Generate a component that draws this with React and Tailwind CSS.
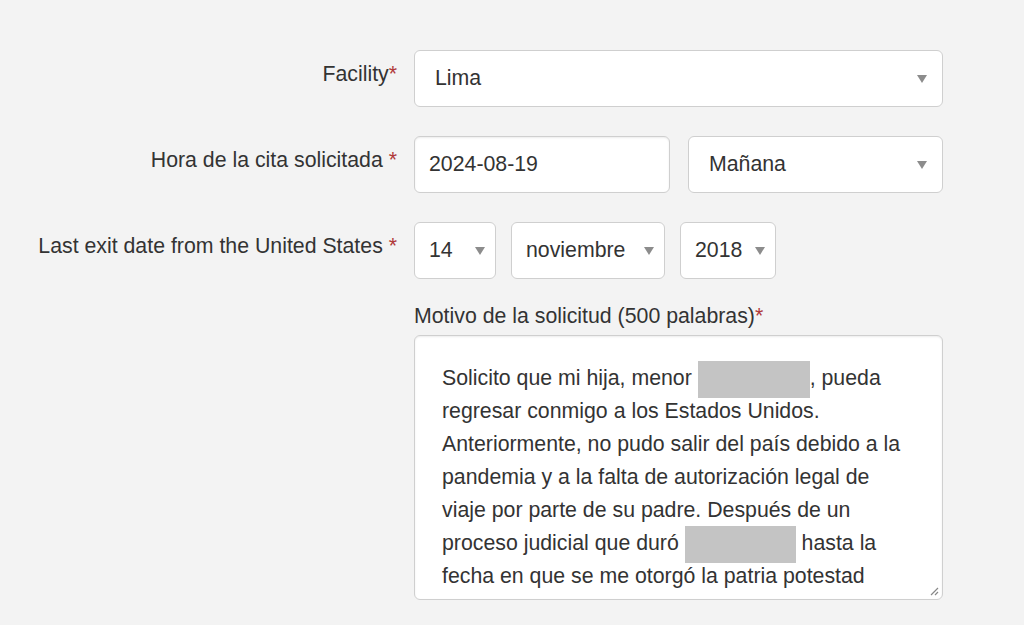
import React from 'react';

const Req = ({ space = true }) => (
  <span className="text-[#b03a3a]">{space ? ' *' : '*'}</span>
);

const Caret = () => (
  <svg width="10" height="8" viewBox="0 0 10 8" className="shrink-0">
    <path d="M0 0 H10 L5 8 Z" fill="#8c8c8c" />
  </svg>
);

function Select({ value, className = '', pad = 'pl-[20px] pr-[15px]' }) {
  return (
    <div className={`h-[57px] bg-white border border-[#cfcfcf] rounded-[6px] flex items-center justify-between ${pad} ${className}`}>
      <span>{value}</span>
      <Caret />
    </div>
  );
}

// greyed-out redaction block, kept from growing the line box
const Redact = ({ w }) => (
  <span className={`inline-block align-middle bg-[#c4c4c4] h-[37px] -my-[4px] ${w}`} />
);

const lines = [
  <>Solicito que mi hija, menor <Redact w="w-[112px]" />, pueda</>,
  'regresar conmigo a los Estados Unidos.',
  'Anteriormente, no pudo salir del país debido a la',
  'pandemia y a la falta de autorización legal de',
  'viaje por parte de su padre. Después de un',
  <>proceso judicial que duró <Redact w="w-[111px]" /> hasta la</>,
  'fecha en que se me otorgó la patria potestad',
];

export default function App() {
  return (
    <div className="w-[1024px] h-[625px] overflow-hidden bg-[#f3f3f3] text-[#333] font-['Liberation_Sans',Arial,sans-serif]">
      <div className="pt-[50px] grid grid-cols-[397px_529px] gap-x-[17px] text-[21.3px]">
        {/* Facility */}
        <div className="text-right pt-[12px] leading-[24px]">Facility<Req space={false} /></div>
        <Select value="Lima" />

        {/* Hora */}
        <div className="text-right pt-[12px] leading-[24px] mt-[29px]">Hora de la cita solicitada<Req /></div>
        <div className="mt-[29px] flex gap-[18px]">
          <div className="w-[256px] h-[57px] bg-white border border-[#cfcfcf] rounded-[6px] flex items-center px-[14px] shadow-[inset_0_1px_2px_rgba(0,0,0,0.08)]">
            2024-08-19
          </div>
          <Select value="Mañana" className="flex-1" />
        </div>

        {/* Last exit */}
        <div className="text-right pt-[12px] leading-[24px] mt-[29px]">Last exit date from the United States<Req /></div>
        <div className="mt-[29px] flex gap-[15px]">
          <Select value="14" className="w-[82px]" pad="pl-[14px] pr-[10px]" />
          <Select value="noviembre" className="w-[154px]" pad="pl-[14px] pr-[10px]" />
          <Select value="2018" className="w-[96px]" pad="pl-[14px] pr-[10px]" />
        </div>

        {/* Motivo */}
        <div />
        <div className="mt-[25px]">
          <div className="leading-[24px]">Motivo de la solicitud (500 palabras)<Req space={false} /></div>
          <div className="relative mt-[7px] h-[265px] bg-white border border-[#cfcfcf] rounded-[6px] overflow-hidden shadow-[inset_0_1px_2px_rgba(0,0,0,0.08)]">
            <div className="pl-[27px] pt-[26px] leading-[33px] whitespace-nowrap">
              {lines.map((l, i) => (
                <div key={i}>{l}</div>
              ))}
            </div>
            <svg className="absolute right-[3px] bottom-[3px]" width="10" height="10" viewBox="0 0 10 10">
              <path d="M9 2 L2 9 M9 6 L6 9" stroke="#888" strokeWidth="1.2" />
            </svg>
          </div>
        </div>
      </div>
    </div>
  );
}
